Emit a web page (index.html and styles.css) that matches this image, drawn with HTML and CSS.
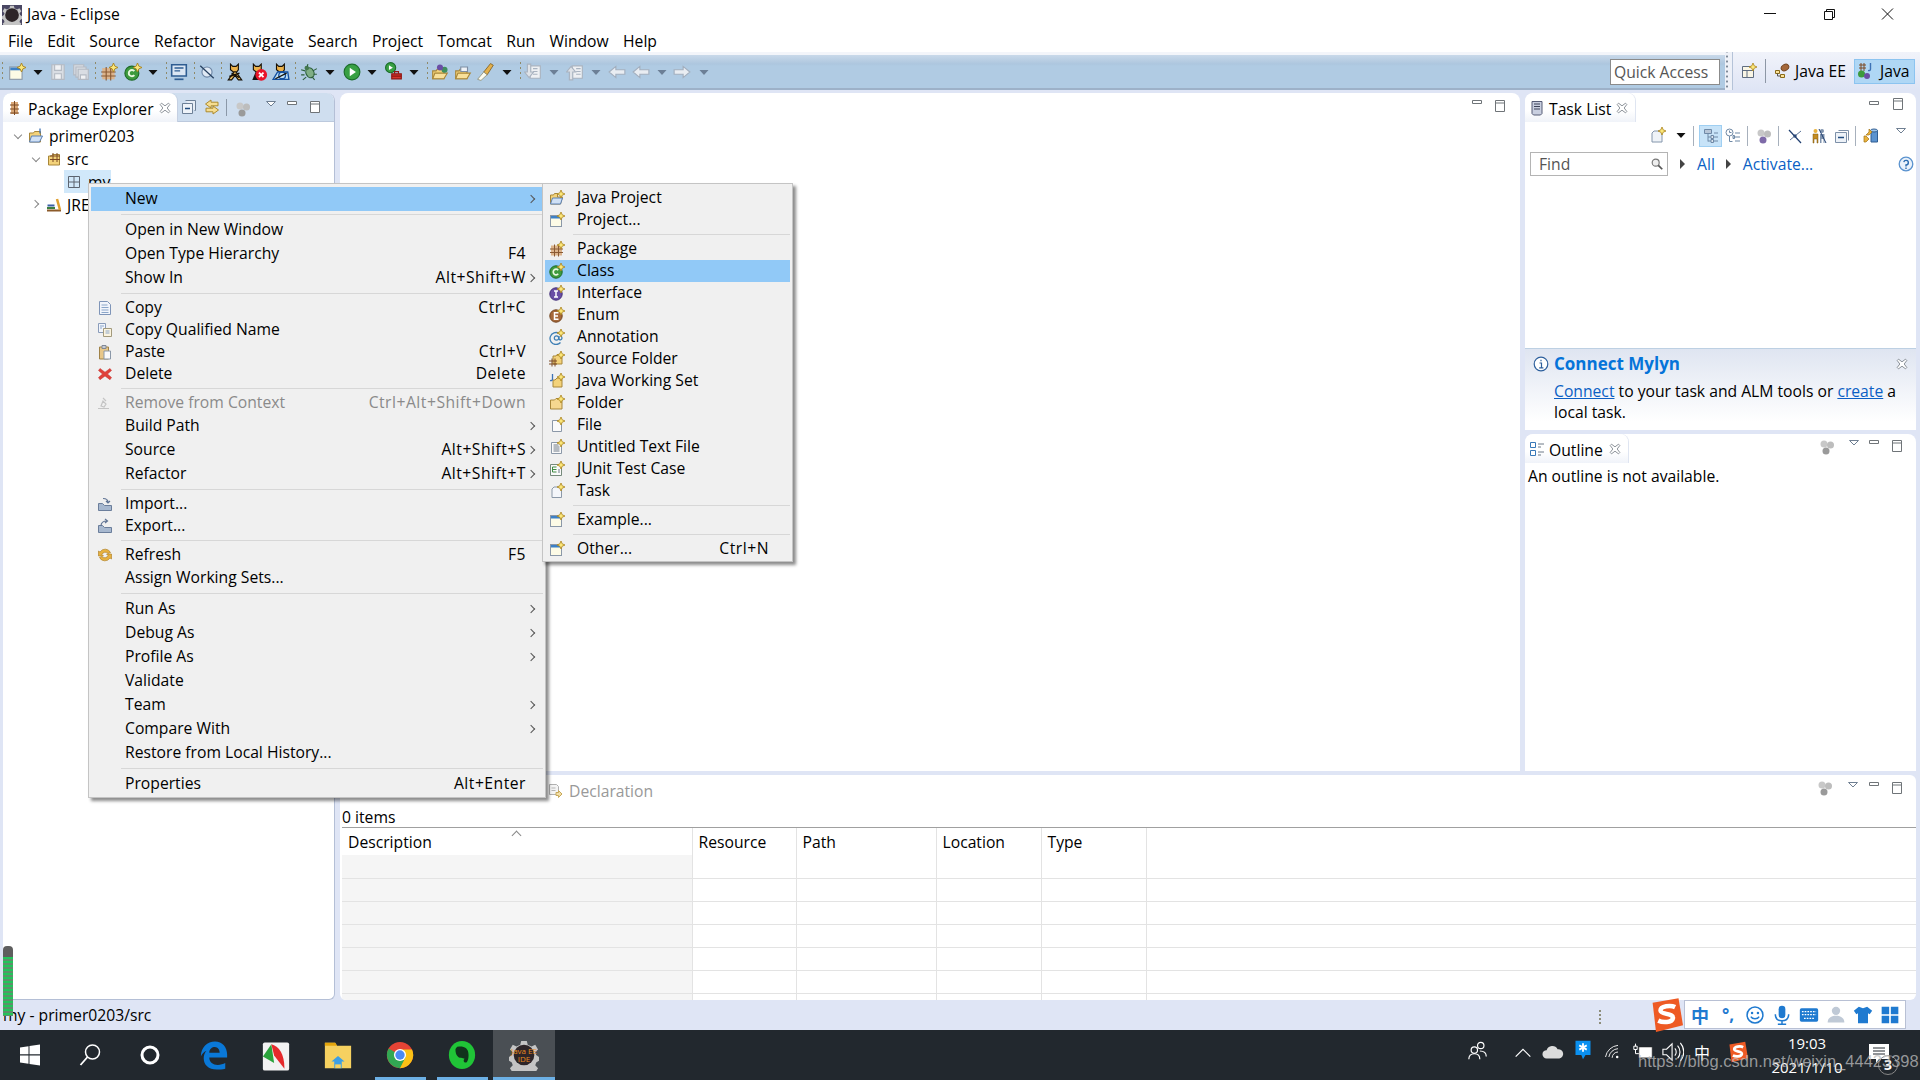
FILE: index.html
```html
<!DOCTYPE html>
<html lang="en">
<head>
<meta charset="utf-8">
<title>Java - Eclipse</title>
<link rel="stylesheet" href="styles.css">
</head>
<body>
<svg class="defs" width="0" height="0" aria-hidden="true">
<defs>
<symbol id="star" viewBox="0 0 16 16"><path d="M12 0l1.200 2.800 2.800 1.200-2.800 1.200L12 8l-1.200-2.800L8 4l2.800-1.200z" fill="#fbe77a" stroke="#a9821c" stroke-width=".8"/></symbol>
<symbol id="win" viewBox="0 0 16 16"><rect x="1.500" y="3.500" width="11" height="11" fill="#fdfbe6" stroke="#8b98a8"/><rect x="2" y="4" width="10" height="2.500" fill="#3d80c6"/></symbol>
<symbol id="winnew" viewBox="0 0 16 16"><use href="#win" width="16" height="16"/><use href="#star" width="16" height="16"/></symbol>
<symbol id="jproj" viewBox="0 0 16 16"><path d="M1.500 14V5h3l1-1.500h3V7h5l-2 7z" fill="#f3d27a" stroke="#a8873a"/><path d="M1.500 14l2-6h10l-2 6z" fill="#cfe0f5" stroke="#5a80b5"/><use href="#star" width="16" height="16"/></symbol>
<symbol id="pkg" viewBox="0 0 16 16"><path d="M2 4.500h11v10H2z" fill="#dcb48c"/><path d="M1 8h13M1 11.500h13M5.500 3.500v12M9.500 3.500v12" stroke="#8a5a34" fill="none"/></symbol>
<symbol id="pkgnew" viewBox="0 0 16 16"><use href="#pkg" width="16" height="16"/><use href="#star" width="16" height="16"/></symbol>
<symbol id="pkgline" viewBox="0 0 16 16"><path d="M2.500 2.500h11v11h-11zM2.500 8h11M8 2.500v11" fill="none" stroke="#5c6470"/></symbol>
<symbol id="class" viewBox="0 0 16 16"><circle cx="7" cy="9" r="6.200" fill="#3d9a3d" stroke="#1d6a25"/><path d="M9.200 7.200a2.800 2.800 0 1 0 0 3.600" fill="none" stroke="#e9f7df" stroke-width="1.700"/><use href="#star" width="16" height="16"/></symbol>
<symbol id="iface" viewBox="0 0 16 16"><circle cx="7" cy="9" r="6.200" fill="#6a4ea5" stroke="#43307a"/><path d="M5 6h4M5 12h4M7 6v6" fill="none" stroke="#fff" stroke-width="1.500"/><use href="#star" width="16" height="16"/></symbol>
<symbol id="enum" viewBox="0 0 16 16"><circle cx="7" cy="9" r="6.200" fill="#a5683a" stroke="#744520"/><path d="M9.500 5.800H5.500v6.400h4M5.500 9h3.500" fill="none" stroke="#fff" stroke-width="1.500"/><use href="#star" width="16" height="16"/></symbol>
<symbol id="annot" viewBox="0 0 16 16"><path d="M11.500 13.500A6 6 0 1 1 13 9c0 2-2.500 2.500-3 1V7" fill="none" stroke="#3e7fb5" stroke-width="1.300"/><circle cx="7.500" cy="9" r="2.200" fill="none" stroke="#3e7fb5" stroke-width="1.200"/><use href="#star" width="16" height="16"/></symbol>
<symbol id="srcf" viewBox="0 0 16 16"><path d="M4 13V5h3l1-1.500h5V13z" fill="#f3d27a" stroke="#a8873a"/><path d="M0 10h8M0 13h8M3 7.500V15.500M6 7.500V15.500" stroke="#7d4a24" fill="none"/><use href="#star" width="16" height="16"/></symbol>
<symbol id="jws" viewBox="0 0 16 16"><path d="M4 14V7h2l2-2h5v9z" fill="#f3d27a" stroke="#a8873a"/><path d="M3.500 1v5q0 2-2.500 1.500" fill="none" stroke="#3d72b5" stroke-width="1.300"/><use href="#star" width="16" height="16"/></symbol>
<symbol id="folder" viewBox="0 0 16 16"><path d="M1.500 14V5h4l1.500-1.500h6V14z" fill="#f6d890" stroke="#a8873a"/><use href="#star" width="16" height="16"/></symbol>
<symbol id="file" viewBox="0 0 16 16"><path d="M3.500 3.500h7l2 2v9h-9z" fill="#fafafa" stroke="#8b98a8"/><use href="#star" width="16" height="16"/></symbol>
<symbol id="txt" viewBox="0 0 16 16"><path d="M2.500 3.500h10v11h-10z" fill="#fafafa" stroke="#8b98a8"/><path d="M4.500 6h5M4.500 8h6M4.500 10h6M4.500 12h6" stroke="#6f7a88"/><use href="#star" width="16" height="16"/></symbol>
<symbol id="junit" viewBox="0 0 16 16"><path d="M1.500 3.500h11v11h-11z" fill="#fafafa" stroke="#768a7c"/><path d="M3.500 6h4M3.500 8.500h4M3.500 11h4M3.500 6v5" stroke="#3c8a42" fill="none"/><path d="M9 9h2M9 11h2" stroke="#6f7a88"/><use href="#star" width="16" height="16"/></symbol>
<symbol id="task" viewBox="0 0 16 16"><path d="M3 6l2-2h7.500v10.500H3z" fill="#f4f6fa" stroke="#8b98a8"/><use href="#star" width="16" height="16"/></symbol>
<symbol id="copy" viewBox="0 0 16 16"><path d="M2.500 1.500h8l3 3v10h-11z" fill="#f2f5fb" stroke="#7f95b8"/><path d="M4.500 5h6M4.500 7.500h7M4.500 10h7M4.500 12.500h7" stroke="#8ba6c9"/></symbol>
<symbol id="copyq" viewBox="0 0 16 16"><path d="M1.500 1.500h7v9h-7z" fill="#f2f5fb" stroke="#8a9cba"/><path d="M6.500 6.500h8v8h-8z" fill="#fbf4e0" stroke="#a39a7c"/><path d="M8.500 9h4M8.500 11h4M3 4h4M3 6h2" stroke="#8ba6c9"/></symbol>
<symbol id="paste" viewBox="0 0 16 16"><path d="M2.500 3h9v12h-9z" fill="#e8c788" stroke="#a08247"/><path d="M5 1.500h4v3H5z" fill="#c7ccd4" stroke="#808896"/><path d="M7 7h6.500v8H7z" fill="#fafafa" stroke="#8b98a8"/></symbol>
<symbol id="del" viewBox="0 0 16 16"><path d="M3 2.500l5 3.700 5-3.700 1.500 2L10.500 8l4 3.500-1.500 2.200L8 10l-5 3.700-1.500-2.200L5.500 8l-4-3.500z" fill="#e0413a" stroke="#c02c28" stroke-width=".5"/></symbol>
<symbol id="rem" viewBox="0 0 16 16"><path d="M1 13.500h11M4 11l2-5 3 3-2 3zM6 3l3 3" fill="none" stroke="#c4c4c4" stroke-width="1.200"/></symbol>
<symbol id="imp" viewBox="0 0 16 16"><path d="M1.500 7.500h4l2 2h7v5h-13z" fill="#a7b8cf" stroke="#6b7e9b"/><path d="M6 2.500c3 0 5 1 5 4M9 5l2 2 2-2" fill="none" stroke="#607494" stroke-width="1.200"/></symbol>
<symbol id="exp" viewBox="0 0 16 16"><path d="M1.500 7.500h4l2 2h7v5h-13z" fill="#a7b8cf" stroke="#6b7e9b"/><path d="M4 8c0-3 2-5 6-5M8 1l2.500 2L8 5" fill="none" stroke="#607494" stroke-width="1.200"/></symbol>
<symbol id="refresh" viewBox="0 0 16 16"><path d="M13.500 5.500A6 6 0 0 0 3 5l-1.500-1v5h5L5 7.500a3.500 3.500 0 0 1 6-1z" fill="#e7b13f" stroke="#a9781c" stroke-width=".6"/><path d="M2.500 10.500A6 6 0 0 0 13 11l1.500 1V7h-5L11 8.500a3.500 3.500 0 0 1-6 1z" fill="#e7b13f" stroke="#a9781c" stroke-width=".6"/></symbol>
<symbol id="tri" viewBox="0 0 16 16"><path d="M3.500 6h9L8 11z" fill="#111"/></symbol>
<symbol id="trig" viewBox="0 0 16 16"><path d="M3.500 6h9L8 11z" fill="#6c7f96"/></symbol>
<symbol id="save" viewBox="0 0 16 16"><path d="M2.500 1.500h11v13h-11z" fill="#d9dde3" stroke="#b4bac3"/><path d="M5 1.500h6v5H5zM5 9.500h6v5H5z" fill="#f1f2f4" stroke="#b4bac3"/></symbol>
<symbol id="saveall" viewBox="0 0 16 16"><path d="M1.500 1.500h9v9h-9z" fill="#d9dde3" stroke="#b4bac3"/><path d="M3.500 3.500h9v9h-9z" fill="#d9dde3" stroke="#b4bac3"/><path d="M5.500 5.500h9v9h-9z" fill="#d9dde3" stroke="#b4bac3"/><path d="M7.500 10.500h5v4h-5z" fill="#f1f2f4" stroke="#b4bac3"/></symbol>
<symbol id="monitor" viewBox="0 0 16 16"><path d="M1.500 1.500h13v10h-13z" fill="#dbe6f3" stroke="#2f5d92" stroke-width="1.400"/><path d="M4 4.500h8M4 7h5" stroke="#2f5d92" stroke-width="1.300"/><path d="M4 14.500h8" stroke="#2f5d92" stroke-width="1.500"/></symbol>
<symbol id="slash" viewBox="0 0 16 16"><circle cx="8" cy="8" r="4.500" fill="#dfe9f4" stroke="#6e87a6"/><path d="M2 2.500l12 11" stroke="#27405f" stroke-width="1.100"/></symbol>
<symbol id="cat" viewBox="0 0 16 16"><path d="M4 1l2 2h3l2-2v5L9.500 8h-3L4 6z" fill="#ecb24a" stroke="#171006"/><path d="M7 8L2 15h3l3-4 3 4h3L9 8z" fill="#f0c060" stroke="#171006"/><path d="M3 12l9-3M12 13L5 9" stroke="#171006" stroke-width="1.300"/></symbol>
<symbol id="catstop" viewBox="0 0 16 16"><path d="M3 1l2 2h3l2-2v5L8.500 8h-3L3 6z" fill="#ecb24a" stroke="#171006"/><path d="M2 15l3-7h3l2 7z" fill="#111"/><circle cx="10" cy="10.500" r="5.200" fill="#e8142a"/><path d="M8 8.500l4 4M12 8.500l-4 4" stroke="#fff" stroke-width="1.600"/></symbol>
<symbol id="catrun" viewBox="0 0 16 16"><path d="M4 1l2 2h3l2-2v5L9.500 8h-3L4 6z" fill="#ecb24a" stroke="#171006"/><path d="M1 14.500L5 8h9l1 6.500z" fill="#bfe0f5" stroke="#1450a0" stroke-width="1.200"/><circle cx="9" cy="11" r="3" fill="none" stroke="#1450a0" stroke-width="1.200"/><path d="M3 14l10-5" stroke="#171006"/></symbol>
<symbol id="bug" viewBox="0 0 16 16"><ellipse cx="8.500" cy="9" rx="3.500" ry="4.500" fill="#7fae85" stroke="#2c5f3a" transform="rotate(-25 8 8)"/><circle cx="6" cy="4.500" r="2" fill="#44784f"/><path d="M1 6l3.500 1M1 10.500h3M2.500 15l3-2.500M7 1L6.500 3M15 5l-3.500 2M15 10h-3M13 15l-2-2.500" stroke="#2c5f3a" fill="none"/></symbol>
<symbol id="run" viewBox="0 0 16 16"><circle cx="8" cy="8" r="7" fill="#38a043" stroke="#1c6d2a"/><path d="M6 4.200L11.500 8 6 11.800z" fill="#fff"/></symbol>
<symbol id="ext" viewBox="0 0 16 16"><circle cx="5" cy="5" r="4.500" fill="#38a043" stroke="#1c6d2a"/><path d="M3.500 2.800L7 5 3.500 7.200z" fill="#fff"/><path d="M6 10.500h8.500v4.500H6z" fill="#d7342c" stroke="#8f1713"/><path d="M8.500 10.500V8.500h3.500v2M6 12.500h8.500" stroke="#8f1713" fill="none"/></symbol>
<symbol id="opentype" viewBox="0 0 16 16"><path d="M1.500 14V7h3l1-1.500h6V14z" fill="#f3d27a" stroke="#a8873a"/><path d="M1.500 14l2-5h11l-3 5z" fill="#f8e09a" stroke="#a8873a"/><circle cx="12" cy="6" r="2.700" fill="#3f8f5e"/><circle cx="8" cy="4" r="2.700" fill="#6a4ea5"/></symbol>
<symbol id="opentask" viewBox="0 0 16 16"><path d="M1.500 14V7h3l1-1.500h6V14z" fill="#f3d27a" stroke="#a8873a"/><path d="M1.500 14l2-5h11l-3 5z" fill="#f8e09a" stroke="#a8873a"/><path d="M6 3.500h6v4H6z" fill="#eef2f7" stroke="#7d8da3"/></symbol>
<symbol id="brush" viewBox="0 0 16 16"><path d="M14.500 2L12 .5 6 8l3 2.500z" fill="#e3b04c" stroke="#7c5a1c" stroke-width=".7"/><path d="M6 8l3 2.500-5.500 5-3-1z" fill="#fbfbf0" stroke="#8a8a70" stroke-width=".7"/></symbol>
<symbol id="next" viewBox="0 0 16 16"><path d="M5.500 2.500h9v11h-9z" fill="#eef0f3" stroke="#a9b3c0"/><path d="M8 5h4M8 7.500h4M8 10h4" stroke="#a9b3c0"/><path d="M3 1h3v7h2.500l-4 5-4-5H3z" fill="#dfe3e8" stroke="#a9b3c0"/></symbol>
<symbol id="prev" viewBox="0 0 16 16"><path d="M5.500 2.500h9v11h-9z" fill="#eef0f3" stroke="#a9b3c0"/><path d="M9 5h4M9 7.500h4M9 10h4" stroke="#a9b3c0"/><path d="M3 15h3V8h2.500l-4-5-4 5H3z" fill="#dfe3e8" stroke="#a9b3c0"/></symbol>
<symbol id="la" viewBox="0 0 16 16"><path d="M1 8l6-5v3h8v4H7v3z" fill="#e9edf2" stroke="#a3afbe"/></symbol>
<symbol id="ra" viewBox="0 0 16 16"><path d="M15 8L9 3v3H1v4h8v3z" fill="#e9edf2" stroke="#a3afbe"/></symbol>
<symbol id="collapse" viewBox="0 0 16 16"><path d="M4.500 1.500h10v10h-1" fill="#e8eef6" stroke="#6d8097"/><path d="M1.500 4.500h10v10h-10z" fill="#eef3f9" stroke="#6d8097"/><path d="M4 9.500h5" stroke="#224d80" stroke-width="1.400"/></symbol>
<symbol id="link" viewBox="0 0 16 16"><path d="M7 1L1.500 5 7 9V6.800h7V3.200H7z" fill="#f6dd90" stroke="#ad8a2c"/><path d="M9 7l5.500 4L9 15v-2.200H2V9.200h7z" fill="#f6dd90" stroke="#ad8a2c"/></symbol>
<symbol id="sync" viewBox="0 0 16 16"><circle cx="5" cy="5" r="3.500" fill="#c8c8c8"/><circle cx="11.500" cy="6" r="3.500" fill="#bdbdbd"/><circle cx="7" cy="12" r="3.500" fill="#9a9a9a"/></symbol>
<symbol id="syncp" viewBox="0 0 16 16"><circle cx="5" cy="5" r="3.500" fill="#c8c8c8"/><circle cx="11.500" cy="6" r="3.500" fill="#bdbdbd"/><circle cx="7" cy="12" r="3.500" fill="#7e6aa8"/></symbol>
<symbol id="chevd" viewBox="0 0 16 16"><path d="M3.500 5.500h9L8 10z" fill="#fff" stroke="#6f7f92"/></symbol>
<symbol id="min" viewBox="0 0 16 16"><path d="M3.500 5.500h9v3h-9z" fill="#fff" stroke="#6f7478"/></symbol>
<symbol id="max" viewBox="0 0 16 16"><path d="M3.500 2.500h9v11h-9zM3.500 5h9" fill="#fff" stroke="#6f7478"/></symbol>
<symbol id="x" viewBox="0 0 16 16"><path d="M4 2.500l4 3 4-3 1.500 1.500-3 4 3 4-1.500 1.500-4-3-4 3L2.500 12l3-4-3-4z" fill="#fff" stroke="#7c828a"/></symbol>
<symbol id="pe" viewBox="0 0 16 16"><path d="M3 2h7v12H3z" fill="#d9a878"/><path d="M6.500 1v14M2 5h9M2 9h9M2 13h9" stroke="#7d4a24" fill="none"/></symbol>
<symbol id="folderj" viewBox="0 0 16 16"><path d="M1.500 14V5h4l1-1.500h6V14z" fill="#f3d27a" stroke="#a8873a"/><path d="M1.500 14l2-6h11l-3 6z" fill="#cfe0f5" stroke="#5a80b5"/><path d="M12 .5v5" stroke="#3d72b5" stroke-width="1.300"/></symbol>
<symbol id="srcfolder" viewBox="0 0 16 16"><path d="M2.500 14V5h3l1-1.500h7V14z" fill="#f3d27a" stroke="#a8873a"/><path d="M7 2v9M11 2v9M4 5h10M4 8.500h10" stroke="#7d4a24" fill="none"/></symbol>
<symbol id="books" viewBox="0 0 16 16"><path d="M1 13.500h14" stroke="#8c5a2a" stroke-width="2"/><path d="M1 11h8" stroke="#3b7f3f" stroke-width="2"/><path d="M1.500 8.500h7" stroke="#3b5fa5" stroke-width="2"/><path d="M11 2l3 11" stroke="#e0a030" stroke-width="2.500"/></symbol>
<symbol id="tasklist" viewBox="0 0 16 16"><path d="M3 1.500h10v12l-1.500 1.500h-7L3 13.500z" fill="#c9cfe0" stroke="#555b75"/><path d="M5 4h6M5 6.500h6M5 9h6" stroke="#3d4359"/></symbol>
<symbol id="tasknew" viewBox="0 0 16 16"><path d="M2 6l2-2h8v11H2z" fill="#eff3f8" stroke="#8496ac"/><use href="#star" width="16" height="16"/></symbol>
<symbol id="hier" viewBox="0 0 16 16"><path d="M1.500 1.500h7v4h-7z" fill="#b7c6d8" stroke="#6f89a6"/><path d="M5 5.500v8M5 9h3M5 13h3M11 5h4M11 9h4M11 13h4" stroke="#6f89a6" fill="none"/><path d="M8 7.500h2.500v3H8zM8 11.500h2.500v3H8z" fill="#dce6f0" stroke="#6f89a6"/></symbol>
<symbol id="sched" viewBox="0 0 16 16"><circle cx="4.500" cy="4.500" r="3.500" fill="#fff" stroke="#6f89a6"/><path d="M4.500 2.500v2h2M4.500 8v5.500h3M10 5h5M10 9h5M10 13h5" stroke="#6f89a6" fill="none"/><path d="M8 7.500h1.500v3H8z" fill="#dce6f0" stroke="#6f89a6"/></symbol>
<symbol id="hide" viewBox="0 0 16 16"><path d="M2 2l12 13" stroke="#1f3e70" stroke-width="1.200"/><path d="M14 3L3 12" stroke="#5a7397"/><path d="M8 6v4M6 8h4" stroke="#1f3e70"/></symbol>
<symbol id="people" viewBox="0 0 16 16"><circle cx="4.500" cy="3" r="2" fill="#e9b23d"/><path d="M2 6h5v9H6v-4H3v4H2z" fill="#c48c20" stroke="#7d5a10" stroke-width=".5"/><circle cx="11" cy="3" r="2" fill="#7f93ad"/><path d="M9 6h4.500v9h-1v-4h-2v4H9z" fill="#7f93ad"/><path d="M8 1l7 14" stroke="#1f3e70"/></symbol>
<symbol id="collapse2" viewBox="0 0 16 16"><path d="M4.500 2.500h10v10" fill="none" stroke="#7d90a8"/><path d="M1.500 4.500h11v10h-11z" fill="#edf2f8" stroke="#7d90a8"/><path d="M4 9.500h6" stroke="#224d80" stroke-width="1.300"/></symbol>
<symbol id="db" viewBox="0 0 16 16"><path d="M8 2.500h6.500v11.500H8z" fill="#5b93cf" stroke="#2f5d92"/><ellipse cx="11" cy="2.500" rx="3.500" ry="1.500" fill="#9fc5ea" stroke="#2f5d92"/><path d="M6 1l3 3-3 3H3L6 4zM3 8l3 3-3 3H1V8z" fill="#e9b23d" stroke="#a07215" stroke-width=".7"/></symbol>
<symbol id="search" viewBox="0 0 16 16"><circle cx="6.500" cy="6.500" r="4" fill="#eee" stroke="#777" stroke-width="1.300"/><path d="M9.500 9.500l4.500 4.500" stroke="#555" stroke-width="2"/></symbol>
<symbol id="help" viewBox="0 0 16 16"><circle cx="8" cy="8" r="6.800" fill="#eaf2fb" stroke="#5b93cf" stroke-width="1.300"/><path d="M5.800 6.200A2.300 2.300 0 1 1 8 9v1.500" fill="none" stroke="#2c6cb0" stroke-width="1.400"/><path d="M8 11.500v1.500" stroke="#2c6cb0" stroke-width="1.400"/></symbol>
<symbol id="info" viewBox="0 0 16 16"><circle cx="8" cy="8" r="6.800" fill="#fff" stroke="#2d5f9c" stroke-width="1.200"/><path d="M6.500 7h2v4.500M6.200 11.800h4.200M8 3.800v1.500" stroke="#2d5f9c" stroke-width="1.200" fill="none"/></symbol>
<symbol id="outline" viewBox="0 0 16 16"><path d="M1.500 1.500h5v5h-5zM1.500 9.500h5v5h-5z" fill="#fff" stroke="#3878b8"/><path d="M9 3h6M9 6h3M9 11h6M9 14h3" stroke="#6f7a88"/></symbol>
<symbol id="decl" viewBox="0 0 16 16"><path d="M2.500 1.500h7l2 2v8h-9z" fill="#f4f4f4" stroke="#b0b0b0"/><path d="M4.500 5h4M4.500 7.500h4" stroke="#b5b5b5"/><path d="M9 9.500h2.500V7.500l3.500 3.500-3.500 3.500v-2H9z" fill="#f4dfa6" stroke="#c7a95a"/></symbol>
<symbol id="persp" viewBox="0 0 16 16"><path d="M1.500 3.500h11v11h-11zM1.500 7.500h11M6 7.500v7" fill="#faf6e5" stroke="#5f6d80"/><use href="#star" width="16" height="16"/></symbol>
<symbol id="jee" viewBox="0 0 16 16"><path d="M1.500 7.500h4v3h-4zM6.500 11.500h4v3h-4z" fill="#fbe39a" stroke="#8a6a18"/><path d="M3.500 10.500v2.500h3" fill="none" stroke="#555"/><ellipse cx="11" cy="4.500" rx="4" ry="3" fill="#a5683a" stroke="#744520" transform="rotate(-30 11 4.500)"/></symbol>
<symbol id="jpersp" viewBox="0 0 16 16"><path d="M1 2h7M1 5h7M3 0v8M6 0v8" stroke="#7d4a24" fill="none"/><path d="M12.500 0v6q0 2-2.500 1.500" fill="none" stroke="#3d72b5" stroke-width="1.400"/><circle cx="3.500" cy="11" r="3.500" fill="#3d9a3d"/><circle cx="9" cy="13" r="3" fill="#6a4ea5"/></symbol>
<symbol id="win10" viewBox="0 0 24 24"><path d="M2 4.500l8.500-1.200v8H2zM11.500 3.100L22 1.600v9.700H11.500zM2 12.500h8.500v8.200L2 19.500zM11.500 12.500H22v9.900l-10.500-1.500z" fill="#fff"/></symbol>
<symbol id="mag" viewBox="0 0 24 24"><circle cx="14.500" cy="9" r="7" fill="none" stroke="#fff" stroke-width="1.500"/><path d="M9.500 14L2.500 22" stroke="#fff" stroke-width="1.800"/></symbol>
<symbol id="ring" viewBox="0 0 24 24"><circle cx="12" cy="12" r="8" fill="none" stroke="#fff" stroke-width="3"/></symbol>
<symbol id="edge" viewBox="0 0 32 32"><path d="M2 17C2 7 9 1 17 1c8 0 13 6 13 14v3H11c0 5 4 8 9 8 3 0 6-1 8-2v6c-3 1-6 1-9 1-9 0-14-5-14-12 0-3 1-6 3-8-3 1-5 4-6 6zM11 13h11c0-3-2-6-5-6-3 0-6 2-6 6z" fill="#0a78d7"/></symbol>
<symbol id="foxit" viewBox="0 0 32 32"><rect x="2" y="2" width="28" height="30" rx="2" fill="#f2f2f2"/><path d="M2 17L11 4l3 20z" fill="#2aa33b"/><path d="M11 4c8 2 14 10 14 26L14 16z" fill="#e5292b"/></symbol>
<symbol id="explorer" viewBox="0 0 32 32"><path d="M2 3h11l2 3h15v24H2z" fill="#f6d160"/><path d="M2 3h11l2 3H2z" fill="#e4a50c"/><path d="M16 17l7 6h-3v7h-8v-7H9z" fill="#3d9fe5"/><path d="M13 26h6v4h-6z" fill="#f6d160"/></symbol>
<symbol id="chrome" viewBox="0 0 32 32"><circle cx="16" cy="16" r="14" fill="#e54335"/><path d="M16 16L3.900 9A14 14 0 0 0 16 30l7-12z" fill="#32a853"/><path d="M16 10h12.800A14 14 0 0 1 16 30l6-12z" fill="#fbc116"/><circle cx="16" cy="16" r="6.500" fill="#fff"/><circle cx="16" cy="16" r="5" fill="#4a8af4"/></symbol>
<symbol id="evernote" viewBox="0 0 32 32"><ellipse cx="16" cy="16" rx="14" ry="15" fill="#20c437"/><path d="M9 10c1-3 3-3 5-3 5 0 9 2 9 9 0 4-1 9-4 8-2-1-1-4 0-4l-4-1c-3 0-6-3-6-9z" fill="#11331c"/></symbol>
<symbol id="gear" viewBox="0 0 32 32"><path d="M13 1h6l1 4 4 2 4-2 3 5-3 3 1 3 3 2v4l-3 2-1 3 3 3-3 5-4-2-4 2-1 3h-6l-1-3-4-2-4 2-3-5 3-3-1-3-3-2v-4l3-2 1-3-3-3 3-5 4 2 4-2z" fill="#c4c4c4"/><circle cx="16" cy="16" r="11" fill="#2d2528"/></symbol>
<symbol id="person" viewBox="0 0 24 24"><circle cx="15" cy="6" r="3.500" fill="none" stroke="#fff" stroke-width="1.300"/><circle cx="8" cy="11" r="3.500" fill="none" stroke="#fff" stroke-width="1.300"/><path d="M2 21c0-4 2-6 6-6s6 2 6 6M14 12c4 0 7 1 7 6" fill="none" stroke="#fff" stroke-width="1.300"/></symbol>
<symbol id="caret" viewBox="0 0 24 24"><path d="M4 17l8-8 8 8" fill="none" stroke="#fff" stroke-width="1.300"/></symbol>
<symbol id="cloud" viewBox="0 0 24 24"><path d="M5 19a4.500 4.500 0 0 1 0-9 6.500 6.500 0 0 1 12-1 5 5 0 0 1 2 10z" fill="#dcdcdc"/></symbol>
<symbol id="qq" viewBox="0 0 24 24"><path d="M3 1h18v17h-6l-3 5-2-5H3z" fill="#0a90f0"/><path d="M12 4v10M7.500 6.500l9 5M16.500 6.500l-9 5" stroke="#fff" stroke-width="2.200"/></symbol>
<symbol id="wifi" viewBox="0 0 24 24"><path d="M3 18A17 17 0 0 1 18 4M7 18A12 12 0 0 1 18 8M11 19A7 7 0 0 1 18 12" fill="none" stroke="#e6e6e6" stroke-width="1.200"/><circle cx="17" cy="18" r="1.500" fill="#fff"/></symbol>
<symbol id="plug" viewBox="0 0 24 24"><path d="M7 6h16v13H7z" fill="#fff" stroke="#222" stroke-width=".6"/><path d="M1 5h4v4H1zM3 2v3M3 9v5h4" fill="none" stroke="#fff" stroke-width="1.200"/></symbol>
<symbol id="vol" viewBox="0 0 24 24"><path d="M1 9h4l6-6v18l-6-6H1z" fill="none" stroke="#fff" stroke-width="1.200"/><path d="M14 8c2 2 2 6 0 8M17 5c3.500 4 3.500 10 0 14M20 2c5 6 5 14 0 20" fill="none" stroke="#fff" stroke-width="1.200"/></symbol>
<symbol id="sogou" viewBox="0 0 32 32"><path d="M5 5L28 1l4 24-24 6z" fill="#ee5a24"/><path d="M25 9c-4-2-13-1-13 3 0 4 12 2 11 7-1 4-9 4-13 2" fill="none" stroke="#fff" stroke-width="4"/></symbol>
<symbol id="msg" viewBox="0 0 24 24"><path d="M2 3h20v15H12l-3 4v-4H2z" fill="#fff"/><path d="M6 7h12M6 10h12M6 13h12" stroke="#22282e"/></symbol>
<symbol id="smile" viewBox="0 0 24 24"><circle cx="12" cy="12" r="9.500" fill="none" stroke="#1f7ad0" stroke-width="1.800"/><circle cx="8.500" cy="9.500" r="1.500" fill="#1f7ad0"/><circle cx="15.500" cy="9.500" r="1.500" fill="#1f7ad0"/><path d="M7 14c2 3.500 8 3.500 10 0" fill="none" stroke="#1f7ad0" stroke-width="1.800"/></symbol>
<symbol id="mic" viewBox="0 0 24 24"><rect x="8" y="1" width="8" height="15" rx="4" fill="#1f7ad0"/><path d="M4 11c0 5 3 8 8 8s8-3 8-8M12 19v4M7 23h10" fill="none" stroke="#1f7ad0" stroke-width="1.800"/></symbol>
<symbol id="kbd" viewBox="0 0 24 24"><rect x="1" y="4" width="22" height="16" rx="2" fill="#1f7ad0"/><path d="M3.500 8h17M3.500 11.500h17M6 16h12" stroke="#fff" stroke-width="1.500" stroke-dasharray="2 1.300"/></symbol>
<symbol id="user" viewBox="0 0 24 24"><circle cx="12" cy="7" r="5" fill="#bfc9d6"/><path d="M2 21c0-6 5-8 10-8s10 2 10 8z" fill="#bfc9d6"/></symbol>
<symbol id="shirt" viewBox="0 0 24 24"><path d="M7 2l5 2 5-2 6 5-3 4-2-1v12H6V10l-2 1-3-4z" fill="#1f7ad0"/></symbol>
<symbol id="grid" viewBox="0 0 24 24"><path d="M2 2h9v9H2zM13 2h9v9h-9zM2 13h9v9H2zM13 13h9v9h-9z" fill="#1f7ad0"/></symbol>
</defs>
</svg>

<header class="titlebar">
  <svg class="app-icon" width="20" height="20" viewBox="0 0 32 32"><rect width="32" height="32" fill="#4a4763"/><use href="#gear" width="32" height="32"/></svg>
  <span class="title-text">Java - Eclipse</span>
  <div class="winbtns">
    <svg class="winbtn" width="60" height="30" viewBox="0 0 60 30"><path d="M24 13.500h12" stroke="#111"/></svg>
    <svg class="winbtn" width="58" height="30" viewBox="0 0 58 30"><path d="M24.500 11.500h8v8h-8zM26.500 11.500v-2h8v8h-2" fill="none" stroke="#111"/></svg>
    <svg class="winbtn" width="60" height="30" viewBox="0 0 60 30"><path d="M24 8.500l11 11M35 8.500l-11 11" stroke="#111"/></svg>
  </div>
</header>

<nav class="menubar">
  <span>File</span><span>Edit</span><span>Source</span><span>Refactor</span><span>Navigate</span><span>Search</span><span>Project</span><span>Tomcat</span><span>Run</span><span>Window</span><span>Help</span>
</nav>

<div class="toolbar">
  <div class="tb-left">
    <svg class="strip" width="720" height="36" viewBox="0 0 720 36">
      <g fill="none" stroke="#8f8a6a" stroke-dasharray="2 3"><path d="M2.500 10v18M95.500 10v18M166.500 10v18M194.500 10v18M221.500 10v18M295.500 10v18M427.500 10v18M520.500 10v18"/></g>
      <use href="#winnew" x="8" y="11" width="18" height="18"/><use href="#tri" x="30" y="12" width="16" height="16"/>
      <use href="#save" x="49" y="11" width="18" height="18"/><use href="#saveall" x="72" y="11" width="18" height="18"/>
      <use href="#pkgnew" x="100" y="11" width="18" height="18"/><use href="#class" x="124" y="11" width="18" height="18"/><use href="#tri" x="145" y="12" width="16" height="16"/>
      <use href="#monitor" x="170" y="11" width="18" height="18"/><use href="#slash" x="198" y="11" width="18" height="18"/>
      <use href="#cat" x="226" y="11" width="18" height="18"/><use href="#catstop" x="250" y="11" width="18" height="18"/><use href="#catrun" x="272" y="11" width="18" height="18"/>
      <use href="#bug" x="300" y="11" width="18" height="18"/><use href="#tri" x="322" y="12" width="16" height="16"/>
      <use href="#run" x="343" y="11" width="18" height="18"/><use href="#tri" x="364" y="12" width="16" height="16"/>
      <use href="#ext" x="385" y="10" width="18" height="18"/><use href="#tri" x="406" y="12" width="16" height="16"/>
      <use href="#opentype" x="431" y="11" width="18" height="18"/><use href="#opentask" x="454" y="11" width="18" height="18"/><use href="#brush" x="477" y="11" width="18" height="18"/><use href="#tri" x="499" y="12" width="16" height="16"/>
      <use href="#next" x="524" y="11" width="18" height="18"/><use href="#trig" x="546" y="12" width="16" height="16"/>
      <use href="#prev" x="566" y="11" width="18" height="18"/><use href="#trig" x="588" y="12" width="16" height="16"/>
      <use href="#la" x="608" y="11" width="18" height="18"/><use href="#la" x="632" y="11" width="18" height="18"/><use href="#trig" x="654" y="12" width="16" height="16"/>
      <use href="#ra" x="673" y="11" width="18" height="18"/><use href="#trig" x="696" y="12" width="16" height="16"/>
    </svg>
    <div class="quick">Quick Access</div>
  </div>
  <div class="grip"></div>
  <div class="persp">
    <svg class="p-icon" width="16" height="16"><use href="#persp" width="16" height="16"/></svg>
    <span class="p-sep"></span>
    <svg class="p-icon" width="16" height="16"><use href="#jee" width="16" height="16"/></svg>
    <span class="p-label">Java EE</span>
    <span class="p-active"><svg width="16" height="16"><use href="#jpersp" width="16" height="16"/></svg><span>Java</span></span>
  </div>
</div>

<main class="workspace">
  <section class="panel explorer">
    <div class="head head-blue">
      <div class="tab tab-pe">
        <svg class="ti" width="16" height="16"><use href="#pe" width="16" height="16"/></svg>
        <span>Package Explorer</span>
        <svg class="tx" width="14" height="14"><use href="#x" width="14" height="14"/></svg>
      </div>
      <svg class="head-strip" width="158" height="29" viewBox="0 0 158 29">
        <use href="#collapse" x="4" y="6" width="16" height="16"/><use href="#link" x="27" y="6" width="16" height="16"/>
        <path d="M49.500 6v17" stroke="#8b98a8"/>
        <use href="#sync" x="58" y="8" width="16" height="16"/><use href="#chevd" x="86" y="3" width="16" height="16"/><use href="#min" x="107" y="3" width="16" height="16"/><use href="#max" x="130" y="6" width="16" height="16"/>
      </svg>
    </div>
    <ul class="tree">
      <li class="row lv0"><span class="twist open"></span><svg width="16" height="16"><use href="#folderj" width="16" height="16"/></svg><span class="node">primer0203</span></li>
      <li class="row lv1"><span class="twist open"></span><svg width="16" height="16"><use href="#srcfolder" width="16" height="16"/></svg><span class="node">src</span></li>
      <li class="row lv2"><span class="sel"><svg width="16" height="16"><use href="#pkgline" width="16" height="16"/></svg><span class="node">my</span></span></li>
      <li class="row lv1"><span class="twist"></span><svg width="16" height="16"><use href="#books" width="16" height="16"/></svg><span class="node">JRE System Library</span></li>
    </ul>
  </section>

  <section class="panel editor">
    <svg class="mm" width="50" height="20" viewBox="0 0 50 20"><use href="#min" x="0" y="0" width="16" height="16"/><use href="#max" x="23" y="3" width="16" height="16"/></svg>
  </section>

  <section class="panel tasklist">
    <div class="head">
      <div class="tab tab-task">
        <svg class="ti" width="16" height="16"><use href="#tasklist" width="16" height="16"/></svg>
        <span>Task List</span>
        <svg class="tx" width="14" height="14"><use href="#x" width="14" height="14"/></svg>
      </div>
      <svg class="head-mm" width="50" height="20" viewBox="0 0 50 20"><use href="#min" x="0" y="3" width="16" height="16"/><use href="#max" x="24" y="3" width="16" height="16"/></svg>
    </div>
    <svg class="task-strip" width="391" height="30" viewBox="0 0 391 30">
      <use href="#tasknew" x="125" y="5" width="16" height="16"/><use href="#tri" x="148" y="5" width="16" height="16"/>
      <path d="M168.500 4v20M222.500 4v20M253.500 4v20M330.500 4v20" stroke="#a7b0bc"/>
      <rect x="174.500" y="3.500" width="22" height="21" fill="#c7e3f8" stroke="#9fcff2"/>
      <use href="#hier" x="178" y="6" width="16" height="16"/><use href="#sched" x="200" y="6" width="16" height="16"/>
      <use href="#syncp" x="231" y="6" width="16" height="16"/><use href="#hide" x="262" y="6" width="16" height="16"/><use href="#people" x="286" y="6" width="16" height="16"/><use href="#collapse2" x="309" y="6" width="16" height="16"/><use href="#db" x="338" y="6" width="16" height="16"/><use href="#chevd" x="368" y="1" width="16" height="16"/>
    </svg>
    <div class="findrow">
      <div class="find"><span>Find</span><svg width="14" height="14"><use href="#search" width="14" height="14"/></svg></div>
      <span class="ltri"></span><a class="lnk">All</a>
      <span class="ltri"></span><a class="lnk">Activate...</a>
      <svg class="helpi" width="16" height="16"><use href="#help" width="16" height="16"/></svg>
    </div>
    <div class="mylyn">
      <div class="my-head">
        <svg width="16" height="16"><use href="#info" width="16" height="16"/></svg>
        <strong>Connect Mylyn</strong>
        <svg class="my-x" width="14" height="14"><use href="#x" width="14" height="14"/></svg>
      </div>
      <p><a class="ul">Connect</a> to your task and ALM tools or <a class="ul">create</a> a local task.</p>
    </div>
  </section>

  <section class="panel outline">
    <div class="head">
      <div class="tab tab-out">
        <svg class="ti" width="16" height="16"><use href="#outline" width="16" height="16"/></svg>
        <span>Outline</span>
        <svg class="tx" width="14" height="14"><use href="#x" width="14" height="14"/></svg>
      </div>
      <svg class="head-mm3 shift7" width="90" height="24" viewBox="0 0 90 24">
        <use href="#sync" x="0" y="5" width="16" height="16"/><use href="#chevd" x="27" y="1" width="16" height="16"/><use href="#min" x="47" y="1" width="16" height="16"/><use href="#max" x="70" y="4" width="16" height="16"/>
      </svg>
    </div>
    <p class="noout">An outline is not available.</p>
  </section>

  <section class="panel bottom">
    <div class="head head-bot">
      <div class="decl"><svg width="16" height="16"><use href="#decl" width="16" height="16"/></svg><span>Declaration</span></div>
      <svg class="head-mm3 shift9" width="90" height="24" viewBox="0 0 90 24">
        <use href="#sync" x="0" y="1" width="16" height="16"/><use href="#chevd" x="28" y="-2" width="16" height="16"/><use href="#min" x="49" y="-2" width="16" height="16"/><use href="#max" x="72" y="1" width="16" height="16"/>
      </svg>
    </div>
    <div class="items">0 items</div>
    <table class="tbl">
      <colgroup><col class="c1"><col class="c2"><col class="c3"><col class="c4"><col class="c5"><col></colgroup>
      <thead><tr><th><span class="sort"></span>Description</th><th>Resource</th><th>Path</th><th>Location</th><th>Type</th><th></th></tr></thead>
      <tbody>
        <tr><td></td><td></td><td></td><td></td><td></td><td></td></tr>
        <tr><td></td><td></td><td></td><td></td><td></td><td></td></tr>
        <tr><td></td><td></td><td></td><td></td><td></td><td></td></tr>
        <tr><td></td><td></td><td></td><td></td><td></td><td></td></tr>
        <tr><td></td><td></td><td></td><td></td><td></td><td></td></tr>
        <tr><td></td><td></td><td></td><td></td><td></td><td></td></tr>
        <tr><td></td><td></td><td></td><td></td><td></td><td></td></tr>
      </tbody>
    </table>
  </section>
</main>

<div class="statusbar"><span>my - primer0203/src</span></div>

<footer class="taskbar">
  <div class="tb-cell"><svg width="24" height="24"><use href="#win10" width="24" height="24"/></svg></div>
  <div class="tb-cell"><svg width="24" height="24"><use href="#mag" width="24" height="24"/></svg></div>
  <div class="tb-cell"><svg width="24" height="24"><use href="#ring" width="24" height="24"/></svg></div>
  <div class="tb-cell tb-app first"><svg width="30" height="33"><use href="#edge" width="30" height="33"/></svg></div>
  <div class="tb-cell tb-app"><svg width="30" height="33"><use href="#foxit" width="30" height="33"/></svg></div>
  <div class="tb-cell tb-app"><svg width="30" height="30"><use href="#explorer" width="30" height="30"/></svg></div>
  <div class="tb-cell tb-app on"><svg width="30" height="34"><use href="#chrome" width="30" height="34"/></svg></div>
  <div class="tb-cell tb-app on"><svg width="30" height="34"><use href="#evernote" width="30" height="34"/></svg></div>
  <div class="tb-cell tb-app active"><svg width="30" height="32"><use href="#gear" width="30" height="32"/><text x="15" y="15" class="ide">Java EE</text><text x="15" y="23" class="ide">IDE</text></svg></div>
  <svg class="tray" width="296" height="50" viewBox="0 0 296 50">
    <use href="#person" x="6" y="10" width="22" height="22"/><use href="#caret" x="51" y="11" width="22" height="22"/><use href="#cloud" x="81" y="11" width="22" height="22"/><use href="#qq" x="112" y="8" width="20" height="24"/><use href="#wifi" x="142" y="12" width="20" height="20"/><use href="#plug" x="171" y="12" width="22" height="20"/><use href="#vol" x="201" y="11" width="22" height="22"/>
    <use href="#sogou" x="265" y="11" width="22" height="22"/>
    <text x="233" y="29" class="ime-zh">中</text>
  </svg>
  <div class="clock"><span>19:03</span><span>2021/1/10</span></div>
  <div class="notif"><svg width="24" height="24"><use href="#msg" width="24" height="24"/></svg><span class="badge">3</span></div>
</footer>

<div class="menu main-menu">
  <div class="mi hl"><span class="ic"></span><span class="lb">New</span><span class="ar"></span></div>
  <div class="sep"></div>
  <div class="mi"><span class="ic"></span><span class="lb">Open in New Window</span></div>
  <div class="mi"><span class="ic"></span><span class="lb">Open Type Hierarchy</span><span class="sc">F4</span></div>
  <div class="mi"><span class="ic"></span><span class="lb">Show In</span><span class="sc">Alt+Shift+W</span><span class="ar"></span></div>
  <div class="sep"></div>
  <div class="mi s"><span class="ic"><svg width="16" height="16"><use href="#copy" width="16" height="16"/></svg></span><span class="lb">Copy</span><span class="sc">Ctrl+C</span></div>
  <div class="mi s"><span class="ic"><svg width="16" height="16"><use href="#copyq" width="16" height="16"/></svg></span><span class="lb">Copy Qualified Name</span></div>
  <div class="mi s"><span class="ic"><svg width="16" height="16"><use href="#paste" width="16" height="16"/></svg></span><span class="lb">Paste</span><span class="sc">Ctrl+V</span></div>
  <div class="mi s"><span class="ic"><svg width="16" height="16"><use href="#del" width="16" height="16"/></svg></span><span class="lb">Delete</span><span class="sc">Delete</span></div>
  <div class="sep"></div>
  <div class="mi s dis"><span class="ic"><svg width="16" height="16"><use href="#rem" width="16" height="16"/></svg></span><span class="lb">Remove from Context</span><span class="sc">Ctrl+Alt+Shift+Down</span></div>
  <div class="mi"><span class="ic"></span><span class="lb">Build Path</span><span class="ar"></span></div>
  <div class="mi"><span class="ic"></span><span class="lb">Source</span><span class="sc">Alt+Shift+S</span><span class="ar"></span></div>
  <div class="mi"><span class="ic"></span><span class="lb">Refactor</span><span class="sc">Alt+Shift+T</span><span class="ar"></span></div>
  <div class="sep"></div>
  <div class="mi s"><span class="ic"><svg width="16" height="16"><use href="#imp" width="16" height="16"/></svg></span><span class="lb">Import...</span></div>
  <div class="mi s"><span class="ic"><svg width="16" height="16"><use href="#exp" width="16" height="16"/></svg></span><span class="lb">Export...</span></div>
  <div class="sep"></div>
  <div class="mi s"><span class="ic"><svg width="16" height="16"><use href="#refresh" width="16" height="16"/></svg></span><span class="lb">Refresh</span><span class="sc">F5</span></div>
  <div class="mi"><span class="ic"></span><span class="lb">Assign Working Sets...</span></div>
  <div class="sep"></div>
  <div class="mi"><span class="ic"></span><span class="lb">Run As</span><span class="ar"></span></div>
  <div class="mi"><span class="ic"></span><span class="lb">Debug As</span><span class="ar"></span></div>
  <div class="mi"><span class="ic"></span><span class="lb">Profile As</span><span class="ar"></span></div>
  <div class="mi"><span class="ic"></span><span class="lb">Validate</span></div>
  <div class="mi"><span class="ic"></span><span class="lb">Team</span><span class="ar"></span></div>
  <div class="mi"><span class="ic"></span><span class="lb">Compare With</span><span class="ar"></span></div>
  <div class="mi"><span class="ic"></span><span class="lb">Restore from Local History...</span></div>
  <div class="sep"></div>
  <div class="mi"><span class="ic"></span><span class="lb">Properties</span><span class="sc">Alt+Enter</span></div>
</div>

<div class="menu sub-menu">
  <div class="mi s"><span class="ic"><svg width="16" height="16"><use href="#jproj" width="16" height="16"/></svg></span><span class="lb">Java Project</span></div>
  <div class="mi s"><span class="ic"><svg width="16" height="16"><use href="#winnew" width="16" height="16"/></svg></span><span class="lb">Project...</span></div>
  <div class="sep"></div>
  <div class="mi s"><span class="ic"><svg width="16" height="16"><use href="#pkgnew" width="16" height="16"/></svg></span><span class="lb">Package</span></div>
  <div class="mi s hl"><span class="ic"><svg width="16" height="16"><use href="#class" width="16" height="16"/></svg></span><span class="lb">Class</span></div>
  <div class="mi s"><span class="ic"><svg width="16" height="16"><use href="#iface" width="16" height="16"/></svg></span><span class="lb">Interface</span></div>
  <div class="mi s"><span class="ic"><svg width="16" height="16"><use href="#enum" width="16" height="16"/></svg></span><span class="lb">Enum</span></div>
  <div class="mi s"><span class="ic"><svg width="16" height="16"><use href="#annot" width="16" height="16"/></svg></span><span class="lb">Annotation</span></div>
  <div class="mi s"><span class="ic"><svg width="16" height="16"><use href="#srcf" width="16" height="16"/></svg></span><span class="lb">Source Folder</span></div>
  <div class="mi s"><span class="ic"><svg width="16" height="16"><use href="#jws" width="16" height="16"/></svg></span><span class="lb">Java Working Set</span></div>
  <div class="mi s"><span class="ic"><svg width="16" height="16"><use href="#folder" width="16" height="16"/></svg></span><span class="lb">Folder</span></div>
  <div class="mi s"><span class="ic"><svg width="16" height="16"><use href="#file" width="16" height="16"/></svg></span><span class="lb">File</span></div>
  <div class="mi s"><span class="ic"><svg width="16" height="16"><use href="#txt" width="16" height="16"/></svg></span><span class="lb">Untitled Text File</span></div>
  <div class="mi s"><span class="ic"><svg width="16" height="16"><use href="#junit" width="16" height="16"/></svg></span><span class="lb">JUnit Test Case</span></div>
  <div class="mi s"><span class="ic"><svg width="16" height="16"><use href="#task" width="16" height="16"/></svg></span><span class="lb">Task</span></div>
  <div class="sep"></div>
  <div class="mi s"><span class="ic"><svg width="16" height="16"><use href="#winnew" width="16" height="16"/></svg></span><span class="lb">Example...</span></div>
  <div class="sep"></div>
  <div class="mi s"><span class="ic"><svg width="16" height="16"><use href="#winnew" width="16" height="16"/></svg></span><span class="lb">Other...</span><span class="sc">Ctrl+N</span></div>
</div>

<div class="gauge"><div class="gauge-fill"></div></div>
<div class="status-grip"></div>
<div class="ime">
  <svg class="ime-s" width="38" height="36"><use href="#sogou" width="38" height="36"/></svg>
  <span class="ime-bar">
    <span class="ime-t">中</span>
    <span class="ime-p">°,</span>
    <svg width="20" height="20"><use href="#smile" width="20" height="20"/></svg>
    <svg width="20" height="20"><use href="#mic" width="20" height="20"/></svg>
    <svg width="20" height="20"><use href="#kbd" width="20" height="20"/></svg>
    <svg width="20" height="20"><use href="#user" width="20" height="20"/></svg>
    <svg width="20" height="20"><use href="#shirt" width="20" height="20"/></svg>
    <svg width="20" height="20"><use href="#grid" width="20" height="20"/></svg>
  </span>
</div>
<div class="watermark">https://blog.csdn.net/weixin_44423398</div>
</body>
</html>
```
FILE: styles.css
```css
* { box-sizing: border-box; }
html, body { height: 100%; }
body {
  margin: 0;
  width: 1920px;
  height: 1080px;
  overflow: hidden;
  position: relative;
  display: flex;
  flex-direction: column;
  background: #dfe5f5;
  color: #000;
  font: 15.7px/20px "Open Sans", "Noto Sans", sans-serif;
}
.defs { position: absolute; }
svg { display: block; flex: none; }

.titlebar { height: 30px; flex: none; background: #fff; display: flex; align-items: center; padding-left: 2px; }
.title-text { padding-bottom: 2px; }
.app-icon { margin-right: 5px; }
.winbtns { margin-left: auto; display: flex; margin-right: 2px; }

.menubar { height: 22px; flex: none; background: #fff; display: flex; gap: 14.3px; padding: 0 0 0 8px; align-items: center; }

.toolbar { height: 38px; flex: none; display: flex; background: #eef1f8; }
.tb-left {
  flex: 1;
  display: flex;
  justify-content: space-between;
  padding: 0 5px 0 0;
  background: linear-gradient(#f3f5fa 0, #f3f5fa 3px, #c9d9ea 3px, #adc6de 12px, #b0cbe3 14px);
  border-bottom: 2px solid #9db1c8;
}
.quick {
  width: 110px;
  height: 26px;
  margin-top: 7px;
  padding-left: 3px;
  background: #fff;
  border: 1px solid #8b8b8b;
  color: #555;
  line-height: 24px;
}
.grip { width: 8px; border-right: 1px solid #b5c3d8; background: radial-gradient(circle, #7f8a99 1px, transparent 1.2px) 0 12px / 4px 5px repeat-y; }
.persp {
  width: 187px;
  display: flex;
  align-items: center;
  background: linear-gradient(#f1f3fa, #dfe5f5);
  padding-left: 8px;
}
.p-sep { width: 1px; height: 24px; background: #8d97a5; margin: 0 8px; }
.p-label { margin-left: 5px; }
.p-active {
  margin-left: 8px;
  width: 61px;
  height: 25px;
  display: flex;
  align-items: center;
  gap: 6px;
  padding-left: 3px;
  background: #afd7f5;
  border: 1px solid #8cc4f0;
}

.workspace {
  height: 910px;
  flex: none;
  padding: 3px 4px 0 3px;
  display: grid;
  grid-template-columns: 332px 1180px 391px;
  grid-template-rows: 337px 337px 225px;
  column-gap: 5px;
  row-gap: 4px;
}
.panel { background: #fff; border-radius: 8px 8px 0 0; display: flex; flex-direction: column; overflow: hidden; position: relative; }
.explorer { grid-row: 1 / 4; border-right: 1px solid #b4bfd6; border-bottom: 1px solid #b4bfd6; border-radius: 8px 8px 6px 0; }
.editor { grid-column: 2; grid-row: 1 / 3; align-items: flex-end; padding: 2px 1px 0 0; }
.tasklist { grid-column: 3; grid-row: 1; }
.outline { grid-column: 3; grid-row: 2; }
.bottom { grid-column: 2 / 4; grid-row: 3; border-radius: 6px; padding-left: 2px; }

.head { height: 29px; flex: none; display: flex; align-items: flex-start; justify-content: space-between; }
.head-blue { background: #cfdeef; border-bottom: 1px solid #bcc9dd; }
.tab {
  height: 29px;
  display: flex;
  align-items: center;
  background: linear-gradient(#fff 60%, #f0f3f9);
  border-radius: 8px 8px 0 0;
  flex: none;
}
.tab span { padding-top: 2px; }
.ti { margin-right: 4px; }
.tx { margin-left: auto; }
.tab-pe { width: 174px; padding: 0 5px 0 5px; box-shadow: 1px 0 0 #c5d0e2; }
.tab-task { width: 110px; padding: 0 6px 0 4px; box-shadow: 1px 0 0 #dfe5f1; }
.tab-out { width: 103px; padding: 0 6px 0 4px; box-shadow: 1px 0 0 #dfe5f1; }
.shift7 { margin-right: 7px; }
.shift9 { margin-right: 9px; }

.tree { list-style: none; margin: 2px 0 0; padding: 0; }
.row { height: 23px; display: flex; align-items: center; gap: 3px; }
.lv0 { padding-left: 10px; }
.lv0 .node, .lv1 .node { margin-left: 2px; }
.lv1 { padding-left: 28px; }
.lv2 { padding-left: 61px; }
.twist { width: 12px; height: 12px; position: relative; flex: none; }
.twist::after {
  content: "";
  position: absolute;
  left: 1px;
  top: 2px;
  width: 5px;
  height: 5px;
  border: solid #888;
  border-width: 0 1px 1px 0;
  transform: rotate(-45deg);
}
.twist.open::after { left: 2px; transform: rotate(45deg); }
.sel { display: flex; align-items: center; gap: 6px; background: #d1e8fa; padding: 2px 5px 2px 2px; height: 23px; width: 47px; }

.task-strip { flex: none; }
.findrow { display: flex; align-items: center; height: 24px; padding-left: 5px; }
.find {
  width: 138px;
  height: 24px;
  border: 1px solid #b4b4b4;
  display: flex;
  align-items: center;
  justify-content: space-between;
  padding: 0 3px 0 8px;
  color: #555;
  margin-right: 12px;
}
.ltri { width: 0; height: 0; border: 5px solid transparent; border-left: 5px solid #444; border-right: 0; margin-right: 12px; }
.lnk { color: #0b5fc4; margin-right: 11px; }
.helpi { margin-left: auto; margin-right: 2px; }
.mylyn {
  margin-top: auto;
  height: 82px;
  border-top: 1px solid #bdd0e3;
  border-radius: 0 0 6px 6px;
  background: linear-gradient(#dfe5f1, #fff 90%);
  padding: 3px 7px 0 8px;
  flex: none;
}
.my-head { display: flex; align-items: center; gap: 5px; height: 24px; }
.my-head strong { font-size: 17px; font-weight: 700; color: #0574d9; }
.my-x { margin-left: auto; }
.mylyn p { margin: 5px 0 0 21px; line-height: 21px; }
.ul { color: #0b5fc4; text-decoration: underline; }
.noout { margin: 3px 0 0 3px; }

.head-bot { height: 31px; padding-top: 4px; }
.decl { display: flex; align-items: center; gap: 6px; color: #999; margin-left: 205px; height: 24px; }
.items { height: 22px; border-bottom: 1px solid #a0a0a0; flex: none; line-height: 22px; }
.tbl { border-collapse: collapse; table-layout: fixed; width: 100%; }
.c1 { width: 350px; }
.c2 { width: 104px; }
.c3 { width: 140px; }
.c4 { width: 105px; }
.c5 { width: 105px; }
.tbl th { height: 27px; font-weight: 400; text-align: left; padding: 0 0 0 6px; border-right: 1px solid #e3e3e3; position: relative; }
.tbl td { height: 23px; padding: 0; border-right: 1px solid #e3e3e3; border-bottom: 1px solid #e3e3e3; }
.tbl td:first-child { background: #f5f5f5; }
.tbl th:last-child, .tbl td:last-child { border-right: 0; }
.sort { position: absolute; left: 171px; top: 4px; width: 7px; height: 7px; border: solid #888; border-width: 1px 0 0 1px; transform: rotate(45deg); }

.statusbar { height: 30px; flex: none; padding-left: 3px; display: flex; align-items: center; }

.taskbar { height: 50px; flex: none; background: #22282e; color: #fff; display: flex; align-items: center; }
.tb-cell { width: 60px; height: 50px; flex: none; display: flex; align-items: center; justify-content: center; position: relative; }
.tb-app { width: 62px; }
.first { margin-left: 3px; }
.on::after, .active::after { content: ""; position: absolute; left: 6px; right: 5px; bottom: 0; height: 3px; background: #6cb0e5; }
.active { background: #4a4f54; }
.active::after { left: 0; right: 0; }
.ide { font-size: 8px; fill: #e78a1f; text-anchor: middle; }
.tray { margin-left: 906px; }
.ime-zh { font-size: 16px; fill: #fff; font-family: "Noto Sans CJK SC", sans-serif; }
.clock { width: 100px; flex: none; display: flex; flex-direction: column; align-items: center; line-height: 24px; font-size: 15px; }
.notif { position: relative; width: 34px; height: 24px; margin: 11px 0 0 10px; flex: none; align-self: flex-start; }
.badge { position: absolute; left: 11px; top: 14px; width: 20px; height: 20px; border: 1px solid #888; border-radius: 50%; text-align: center; line-height: 18px; font-size: 14px; font-weight: 700; }

.menu {
  position: absolute;
  top: 183px;
  padding: 3px 2px;
  background: #f0f0f0;
  border: 1px solid #c4c4c4;
  box-shadow: 3px 3px 3px rgba(0, 0, 0, .45);
}
.main-menu { left: 88px; width: 458px; height: 615px; }
.sub-menu { left: 542px; width: 251px; height: 379px; }
.mi { height: 24px; display: flex; align-items: center; }
.mi.s { height: 22px; }
.hl { background: #91c9f7; }
.ic { flex: none; display: flex; justify-content: center; }
.main-menu .ic { width: 34px; padding-right: 6px; }
.sub-menu .ic { width: 32px; padding-right: 8px; }
.lb { flex: 1; padding-bottom: 2px; }
.sc { text-align: right; padding-bottom: 2px; letter-spacing: .5px; }
.main-menu .mi { padding-right: 17px; position: relative; }
.sub-menu .mi { padding-right: 21px; }
.ar { position: absolute; right: 9px; top: 50%; width: 6px; height: 6px; margin-top: -3px; border: solid #555; border-width: 1px 1px 0 0; transform: rotate(45deg); }
.dis { color: #8a8a8a; }
.sep { height: 7px; position: relative; }
.sep::after { content: ""; position: absolute; right: 0; top: 3px; height: 1px; background: #d7d7d7; }
.main-menu .sep::after { left: 30px; }
.sub-menu .sep::after { left: 28px; }

.gauge { position: absolute; left: 3px; top: 946px; width: 10px; height: 70px; background: #5e5e5e; border-radius: 4px 4px 0 0; padding-top: 11px; }
.gauge-fill { height: 59px; background: repeating-linear-gradient(#22c55a 0, #22c55a 2px, #5d8f6c 2px, #5d8f6c 4px); }
.status-grip { position: absolute; left: 1599px; top: 1010px; width: 2px; height: 15px; background: repeating-linear-gradient(#8d8d7a 0, #8d8d7a 2px, transparent 2px, transparent 4px); }
.ime { position: absolute; left: 1646px; top: 997px; display: flex; align-items: flex-start; }
.ime-s { position: relative; z-index: 1; }
.ime-bar {
  position: absolute;
  left: 38px;
  top: 3px;
  width: 222px;
  height: 29px;
  background: #fff;
  border: 1px solid #b8c0d4;
  display: flex;
  align-items: center;
  gap: 7px;
  padding-left: 6px;
}
.ime-t { font: 700 18px/20px "Noto Sans CJK SC", sans-serif; color: #1f7ad0; width: 20px; }
.ime-p { font: 700 17px/18px "Open Sans", sans-serif; color: #1f7ad0; width: 20px; text-align: center; }
.watermark {
  position: absolute;
  left: 1638px;
  top: 1050px;
  font: 16.5px/22px "Liberation Sans", sans-serif;
  color: rgba(190, 190, 190, .75);
  white-space: nowrap;
}
```
